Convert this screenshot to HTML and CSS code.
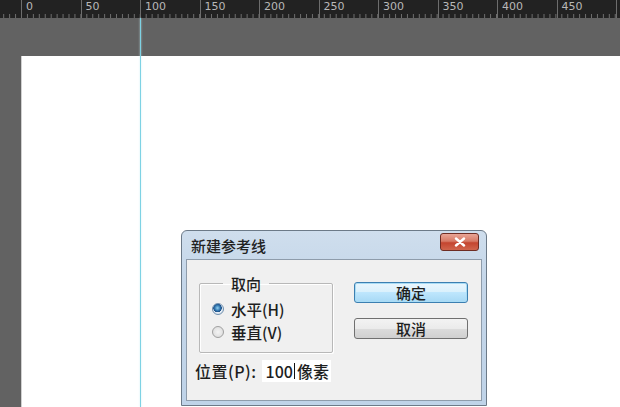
FILE: index.html
```html
<!DOCTYPE html>
<html lang="zh-CN">
<head>
    <meta charset="UTF-8">
    <title>新建参考线</title>
    <link rel="stylesheet" href="styles.css">
</head>
<body>
    <div class="ruler">
        <span class="seg">0</span>
        <span class="seg">50</span>
        <span class="seg">100</span>
        <span class="seg">150</span>
        <span class="seg">200</span>
        <span class="seg">250</span>
        <span class="seg">300</span>
        <span class="seg">350</span>
        <span class="seg">400</span>
        <span class="seg">450</span>
        <span class="seg"></span>
    </div>
    <div class="workspace">
        <div class="canvas"></div>
        <div class="guide"></div>

        <div class="dialog">
            <div class="titlebar">
                <span class="title">新建参考线</span>
                <button class="close" type="button" aria-label="关闭">
                    <svg width="14" height="10" viewBox="0 0 14 10">
                        <path d="M3 1.5 L11 8.5 M11 1.5 L3 8.5" stroke="#fff" stroke-width="2.4" stroke-linecap="round"/>
                    </svg>
                </button>
            </div>
            <div class="client">
                <div class="left-col">
                    <fieldset class="group">
                        <legend>取向</legend>
                        <label class="radio-row"><span class="radio checked"></span>水平(H)</label>
                        <label class="radio-row"><span class="radio"></span>垂直(V)</label>
                    </fieldset>
                    <div class="pos-row">
                        <span class="pos-label">位置(P):</span>
                        <span class="pos-input">100<span class="caret"></span>像素</span>
                    </div>
                </div>
                <div class="right-col">
                    <button class="btn default" type="button">确定</button>
                    <button class="btn" type="button">取消</button>
                </div>
            </div>
        </div>
    </div>
</body>
</html>
```

FILE: styles.css
```css
body {
    margin: 0;
    width: 620px;
    height: 407px;
    overflow: hidden;
    background: #626262;
    font-family: "Noto Sans CJK SC", "Noto Sans", sans-serif;
    color: #1e1e1e;
}
.ruler {
    height: 18px;
    display: flex;
    padding-left: 21px;
    background-color: #222;
    background-image: linear-gradient(to right, #6d6d6d 1px, transparent 1px);
    background-size: 5.95px 4px;
    background-repeat: repeat-x;
    background-position: 21px 100%;
    overflow: hidden;
}
.seg {
    flex: 0 0 59.5px;
    box-sizing: border-box;
    border-left: 1px solid #6d6d6d;
    padding-left: 4px;
    font-family: "DejaVu Sans", sans-serif;
    font-size: 11px;
    line-height: 14px;
    color: #b8b8b8;
}
.workspace {
    position: relative;
    height: 389px;
    padding: 38px 0 0 21px;
    box-sizing: border-box;
}
.canvas {
    height: 100%;
    background: #fff;
    border-left: 1px solid #d0d0d0;
}
.guide {
    position: absolute;
    left: 140px;
    top: 0;
    bottom: 0;
    width: 1px;
    background: #7ed2e4;
    box-shadow: 0 0 2px #bfeaf2;
}
.dialog {
    position: absolute;
    left: 181px;
    top: 212px;
    width: 306px;
    height: 176px;
    box-sizing: border-box;
    border: 1px solid #6c7a88;
    border-radius: 6px 6px 0 0;
    background: linear-gradient(#cfdeed, #c4d6e9 30%, #bfd3e8);
    padding: 0 4px 4px;
    display: flex;
    flex-direction: column;
    font-weight: 500;
}
.titlebar {
    height: 28px;
    display: flex;
    align-items: center;
    justify-content: space-between;
    padding-left: 5px;
}
.title {
    font-size: 15px;
    color: #222;
}
.close {
    width: 39px;
    height: 18px;
    margin-top: -6px;
    margin-right: 3px;
    padding: 0;
    border: 1px solid #6e2d24;
    border-radius: 3px;
    background: linear-gradient(#e9a596, #d77a66 45%, #c4452f 55%, #d0654d);
    display: flex;
    align-items: center;
    justify-content: center;
}
.client {
    flex: 1;
    background: #f0f0f0;
    border: 1px solid #8e9cab;
    display: flex;
    padding: 15px 0 0 12px;
}
.left-col {
    width: 134px;
}
.group {
    margin: 0;
    padding: 5px 0 9px 12px;
    border: 1px solid #b8b8b8;
    border-radius: 2px;
    box-shadow: inset 1px 1px 0 #fff, 1px 1px 0 #fff;
}
.group legend {
    margin-left: 11px;
    padding: 0 8px;
    font-size: 15px;
    line-height: 17px;
}
.radio-row {
    display: flex;
    align-items: center;
    height: 23px;
    font-size: 15.5px;
}
.radio {
    width: 10px;
    height: 10px;
    margin-right: 7px;
    border: 1px solid #a0a0a0;
    border-radius: 50%;
    background: radial-gradient(circle, #f4f4f4, #d8d8d8);
}
.radio.checked {
    border-color: #6f8fae;
    background: radial-gradient(circle at 45% 40%, #8fd0f2 0, #2b6ea8 3px, #1d4f86 4px, #e6eef6 4.5px, #d2dde8);
}
.pos-row {
    display: flex;
    align-items: center;
    margin: 7px 0 0 -4px;
    height: 22px;
    font-size: 16px;
}
.pos-label {
    margin-right: 5px;
    letter-spacing: 0.5px;
}
.pos-input {
    display: flex;
    align-items: center;
    height: 22px;
    padding: 0 2px 0 4px;
    background: #fff;
    white-space: nowrap;
}
.caret {
    width: 1px;
    height: 16px;
    background: #111;
    margin: 0 2px 0 1px;
}
.right-col {
    margin-left: 21px;
    padding-top: 7px;
    display: flex;
    flex-direction: column;
    gap: 15px;
}
.btn {
    width: 114px;
    height: 21px;
    padding: 0;
    border: 1px solid #707070;
    border-radius: 3px;
    background: linear-gradient(#f3f3f3, #ebebeb 50%, #dcdcdc 50%, #d0d0d0);
    font-family: "Noto Sans CJK SC", sans-serif;
    font-size: 15px;
    font-weight: 500;
    line-height: 19px;
    color: #1e1e1e;
}
.btn.default {
    border-color: #3c7fb1;
    background: linear-gradient(#eaf6fd, #d9f0fc 50%, #bee6fd 50%, #a7d9f5);
    box-shadow: inset 0 0 0 1px #a9dcf5;
}
```
